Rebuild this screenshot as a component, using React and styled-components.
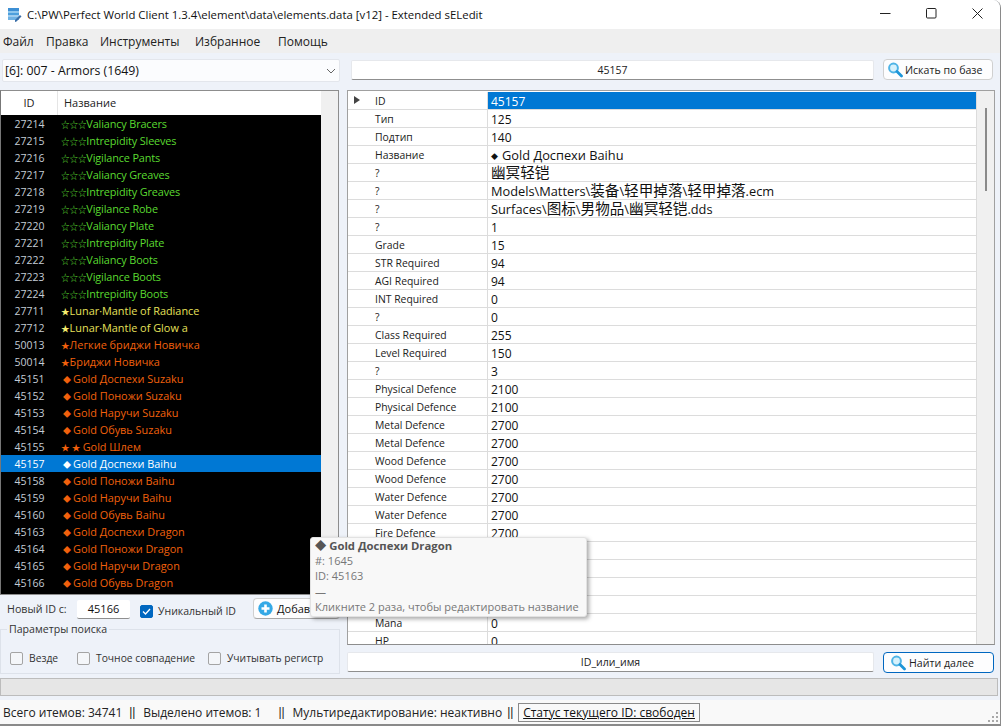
import React from 'react'
import styled, { createGlobalStyle } from 'styled-components'

const uiFont = `"Open Sans", "Noto Sans CJK SC", sans-serif`

const GlobalStyle = createGlobalStyle`
  html, body {
    margin: 0;
    padding: 0;
    background: #fff;
    overflow: hidden;
  }
  * { box-sizing: border-box; }
`

const items = [
  ['27214', '☆☆☆', 'Valiancy Bracers', 'green'],
  ['27215', '☆☆☆', 'Intrepidity Sleeves', 'green'],
  ['27216', '☆☆☆', 'Vigilance Pants', 'green'],
  ['27217', '☆☆☆', 'Valiancy Greaves', 'green'],
  ['27218', '☆☆☆', 'Intrepidity Greaves', 'green'],
  ['27219', '☆☆☆', 'Vigilance Robe', 'green'],
  ['27220', '☆☆☆', 'Valiancy Plate', 'green'],
  ['27221', '☆☆☆', 'Intrepidity Plate', 'green'],
  ['27222', '☆☆☆', 'Valiancy Boots', 'green'],
  ['27223', '☆☆☆', 'Vigilance Boots', 'green'],
  ['27224', '☆☆☆', 'Intrepidity Boots', 'green'],
  ['27711', '★', 'Lunar·Mantle of Radiance', 'yellow'],
  ['27712', '★', 'Lunar·Mantle of Glow a', 'yellow'],
  ['50013', '★', 'Легкие бриджи Новичка', 'orange'],
  ['50014', '★', 'Бриджи Новичка', 'orange'],
  ['45151', '◆', 'Gold Доспехи Suzaku', 'orange'],
  ['45152', '◆', 'Gold Поножи Suzaku', 'orange'],
  ['45153', '◆', 'Gold Наручи Suzaku', 'orange'],
  ['45154', '◆', 'Gold Обувь Suzaku', 'orange'],
  ['45155', '★ ★ ', 'Gold Шлем', 'orange'],
  ['45157', '◆', 'Gold Доспехи Baihu', 'selected'],
  ['45158', '◆', 'Gold Поножи Baihu', 'orange'],
  ['45159', '◆', 'Gold Наручи Baihu', 'orange'],
  ['45160', '◆', 'Gold Обувь Baihu', 'orange'],
  ['45163', '◆', 'Gold Доспехи Dragon', 'orange'],
  ['45164', '◆', 'Gold Поножи Dragon', 'orange'],
  ['45165', '◆', 'Gold Наручи Dragon', 'orange'],
  ['45166', '◆', 'Gold Обувь Dragon', 'orange'],
]

const fields = [
  ['ID', '45157'],
  ['Тип', '125'],
  ['Подтип', '140'],
  ['Название', '◆ Gold Доспехи Baihu'],
  ['?', '幽冥轻铠'],
  ['?', 'Models\\Matters\\装备\\轻甲掉落\\轻甲掉落.ecm'],
  ['?', 'Surfaces\\图标\\男物品\\幽冥轻铠.dds'],
  ['?', '1'],
  ['Grade', '15'],
  ['STR Required', '94'],
  ['AGI Required', '94'],
  ['INT Required', '0'],
  ['?', '0'],
  ['Class Required', '255'],
  ['Level Required', '150'],
  ['?', '3'],
  ['Physical Defence', '2100'],
  ['Physical Defence', '2100'],
  ['Metal Defence', '2700'],
  ['Metal Defence', '2700'],
  ['Wood Defence', '2700'],
  ['Wood Defence', '2700'],
  ['Water Defence', '2700'],
  ['Water Defence', '2700'],
  ['Fire Defence', '2700'],
  ['Fire Defence', '2700'],
  ['Earth Defence', '2700'],
  ['Earth Defence', '2700'],
  ['Damage', '0'],
  ['Mana', '0'],
  ['HP', '0'],
]

const itemColors = {
  green: '#5ada30',
  yellow: '#e6e05a',
  orange: '#f2600c',
  selected: '#ffffff',
}

const Window = styled.div`
  position: relative;
  width: 1001px;
  height: 726px;
  display: flex;
  flex-direction: column;
  overflow: hidden;
  background: #eef2f9;
  font-family: ${uiFont};
  color: #1a1a1a;
  border-right: 1px solid #8a8a8a;
  border-bottom: 2px solid #8a8a8a;
  border-top-right-radius: 8px;
`

const TitleBar = styled.div`
  height: 29px;
  flex: none;
  display: flex;
  align-items: center;
  background: #fff;
  padding-left: 8px;
`

const TitleText = styled.span`
  margin-left: 5px;
  font-size: 11.4px;
  color: #111;
  white-space: nowrap;
`

const WindowButtons = styled.div`
  margin-left: auto;
  align-self: flex-start;
  display: flex;
  align-items: center;
`

const WindowButton = styled.div`
  width: 46px;
  height: 26px;
  display: flex;
  align-items: center;
  justify-content: center;
`

const MenuBar = styled.div`
  height: 24px;
  flex: none;
  display: flex;
  align-items: center;
  background: #efefef;
  padding-left: 3px;
  font-size: 12px;
  color: #222;
`

const MenuItem = styled.span`
  width: ${(p) => p.$w}px;
  white-space: nowrap;
`

const Content = styled.div`
  flex: 1;
  min-height: 0;
  display: grid;
  grid-template-columns: 340px 1fr;
  column-gap: 7px;
  padding-top: 6px;
`

const LeftColumn = styled.div`
  display: flex;
  flex-direction: column;
  margin-left: 1px;
  margin-right: -1px;
`

const Combo = styled.div`
  height: 23px;
  flex: none;
  margin: 0 1px 0 1px;
  display: flex;
  align-items: center;
  justify-content: space-between;
  padding: 0 3px 0 2px;
  background: #fbfcfe;
  border: 1px solid #e3e6ec;
  border-radius: 2px;
  font-size: 12.3px;
  color: #111;
`

const ItemList = styled.div`
  margin-top: 8px;
  margin-left: -1px;
  width: 339px;
  height: 505px;
  flex: none;
  border: 1px solid #8d8d8d;
  border-left-color: #777;
  background: #f0f0f0;
  overflow: hidden;
`

const ListHeader = styled.div`
  width: 320px;
  height: 24px;
  display: grid;
  grid-template-columns: 57px 1fr;
  align-items: center;
  background: #fff;
  font-size: 11px;
  color: #222;
`

const HeaderCell = styled.div`
  height: 100%;
  display: flex;
  align-items: center;
  padding-left: ${(p) => p.$pad || 0}px;
  padding-bottom: 2px;
  justify-content: ${(p) => (p.$center ? 'center' : 'flex-start')};
  border-right: ${(p) => (p.$center ? '1px solid #e5e5e5' : 'none')};
`

const ListBody = styled.div`
  width: 320px;
  height: 479px;
  background: #000;
`

const ListRow = styled.div`
  height: 17px;
  display: grid;
  grid-template-columns: 57px 1fr;
  align-items: center;
  font-size: 10.9px;
  letter-spacing: ${(p) => (p.$kind === 'green' ? '-0.15px' : '0')};
  line-height: 17px;
  background: ${(p) => (p.$kind === 'selected' ? '#0078d4' : '#000')};
`

const RowId = styled.span`
  text-align: center;
  font-size: 10.5px;
  letter-spacing: 0;
  color: ${(p) => (p.$kind === 'selected' ? '#fff' : '#c4ccd6')};
`

const RowName = styled.span`
  padding-left: 3px;
  white-space: pre;
  color: ${(p) => itemColors[p.$kind]};
`

const RowGlyph = styled.span`
  display: inline-block;
  font-size: ${(p) => (p.$diamond ? '8px' : '8.6px')};
  width: ${(p) => (p.$diamond ? '12px' : 'auto')};
  padding-left: ${(p) => (p.$diamond ? '2px' : '0')};
  color: ${(p) => (p.$lit ? '#f5ec70' : 'inherit')};
`

const IdRow = styled.div`
  height: 28px;
  flex: none;
  display: flex;
  align-items: center;
  font-size: 10.7px;
  color: #333;
  padding-left: 6px;
`

const IdLabel = styled.span`
  width: 70px;
  white-space: nowrap;
`

const IdInput = styled.div`
  width: 53px;
  height: 19px;
  display: flex;
  align-items: center;
  justify-content: center;
  background: #fff;
  border-bottom: 1px solid #8f8f8f;
  border-radius: 2px;
  color: #111;
  font-size: 11px;
`

const CheckBox = styled.span`
  width: 13px;
  height: 13px;
  flex: none;
  display: flex;
  align-items: center;
  justify-content: center;
  border-radius: 2px;
  background: ${(p) => (p.$checked ? '#0067c0' : '#f4f6f9')};
  border: 1px solid ${(p) => (p.$checked ? '#0067c0' : '#a4a4a4')};
`

const CheckLabel = styled.span`
  margin-left: ${(p) => (p.$tight ? '5px' : '6px')};
  white-space: nowrap;
`

const UniqueBox = styled.div`
  margin: 4px 0 0 10px;
  width: 113px;
  display: flex;
  align-items: center;
  font-size: 10.5px;
`

const AddButton = styled.div`
  width: 87px;
  height: 21px;
  margin-top: -1px;
  display: flex;
  align-items: center;
  padding-left: 4px;
  gap: 4px;
  background: #fdfdfe;
  border: 1px solid #d0d0d0;
  border-bottom-color: #a8a8a8;
  border-radius: 4px;
  font-size: 11px;
  color: #111;
  white-space: nowrap;
`

const SearchGroup = styled.fieldset`
  margin: 0 0 0 -1px;
  padding: 15px 0 0 9px;
  width: 340px;
  height: 51px;
  flex: none;
  border: 1px solid #dde2ea;
  display: flex;
  align-items: center;
  font-size: 10.3px;
  color: #333;
`

const GroupLegend = styled.legend`
  margin-left: -3px;
  padding: 0 2px;
  font-size: 10.6px;
  line-height: 13px;
  color: #333;
`

const SearchOption = styled.div`
  display: flex;
  align-items: center;
  width: ${(p) => p.$w}px;
`

const RightColumn = styled.div`
  display: flex;
  flex-direction: column;
  min-width: 0;
`

const SearchRow = styled.div`
  height: 31px;
  flex: none;
  display: grid;
  grid-template-columns: 523px 110px;
  column-gap: 9px;
  padding-left: 4px;
  align-items: start;
`

const CenterField = styled.div`
  height: 20px;
  margin-top: ${(p) => (p.$bottom ? '0' : '1px')};
  display: flex;
  align-items: center;
  justify-content: center;
  background: #fff;
  border: 1px solid #e6e8ec;
  border-bottom-color: #8f8f8f;
  border-radius: 2px;
  font-size: 10.5px;
  color: #222;
`

const FindButton = styled.div`
  height: 21px;
  display: flex;
  align-items: center;
  padding-left: ${(p) => (p.$active ? '6px' : '3px')};
  gap: ${(p) => (p.$active ? '3px' : '2px')};
  background: #fdfdfe;
  border: 1px solid ${(p) => (p.$active ? '#0067c0' : '#d0d0d0')};
  border-radius: 4px;
  font-size: 10.6px;
  color: #222;
  white-space: nowrap;
`

const Grid = styled.div`
  width: 648px;
  height: 555px;
  flex: none;
  display: flex;
  border: 1px solid #a0a0a0;
  border-bottom-color: #8d8d8d;
  background: #f0f0f0;
  overflow: hidden;
`

const GridRows = styled.div`
  width: 628px;
  flex: none;
  padding-top: 1px;
  background: #fff;
`

const GridRow = styled.div`
  height: 18px;
  display: grid;
  grid-template-columns: 140px 1fr;
  background: #fff;
  border-bottom: 1px solid #dcdcdc;
`

const FieldLabel = styled.div`
  position: relative;
  padding-left: 27px;
  font-size: 10.4px;
  line-height: 19px;
  height: 17px;
  color: #222;
  border-right: 1px solid #dcdcdc;
  white-space: nowrap;
`

const RowPointer = styled.span`
  position: absolute;
  left: 6px;
  top: 4px;
  width: 0;
  height: 0;
  border-left: 6px solid #444;
  border-top: 4.5px solid transparent;
  border-bottom: 4.5px solid transparent;
`

const FieldValue = styled.div`
  padding-left: 3px;
  height: 17px;
  font-size: ${(p) => (p.$numeric ? '12px' : '12.8px')};
  line-height: 19px;
  white-space: pre;
  color: ${(p) => (p.$selected ? '#fff' : '#111')};
  background: ${(p) => (p.$selected ? '#0078d4' : '#fff')};
`

const Han = styled.span`
  font-size: 14.6px;
  line-height: 1;
`

const SmallDiamond = styled.span`
  display: inline-block;
  width: 11px;
  font-size: 7px;
  vertical-align: 1px;
  line-height: 1;
`

const GridScroll = styled.div`
  flex: 1;
  padding-top: 17px;
  display: flex;
  justify-content: center;
  border-left: 1px solid #dcdcdc;
`

const ScrollThumb = styled.div`
  width: 2px;
  height: 83px;
  background: #8a8a8a;
`

const BottomRow = styled.div`
  margin-top: 7px;
  display: grid;
  grid-template-columns: 527px 111px;
  column-gap: 9px;
`

const ProgressBar = styled.div`
  height: 18px;
  flex: none;
  margin: 4px 2px 0 0;
  background: #e6e6e6;
  border: 1px solid #bcbcbc;
`

const StatusBar = styled.div`
  position: relative;
  margin-top: 4px;
  height: 24px;
  flex: none;
  display: flex;
  align-items: center;
  padding-left: 3px;
  background: #f9f9f9;
  font-size: 12px;
  color: #222;
  white-space: pre;
`

const StatusSep = styled.span`
  font-family: "Liberation Sans", sans-serif;
  width: 6px;
  margin: 0 ${(p) => p.$right}px 0 ${(p) => p.$left}px;
`

const StatusLink = styled.span`
  padding: 1px 4px;
  border: 1px solid #8a8a8a;
  text-decoration: underline;
  line-height: 15px;
  color: #111;
`

const ResizeGrip = styled.svg`
  position: absolute;
  right: 1px;
  bottom: 1px;
`

const Tooltip = styled.div`
  position: absolute;
  left: 310px;
  top: 537px;
  width: 277px;
  height: 80px;
  padding: 0 4px;
  background: #f8f8f8;
  border: 1px solid #e2e2e2;
  border-radius: 3px;
  box-shadow: 2px 2px 4px rgba(0, 0, 0, 0.35);
  font-size: 11px;
  line-height: 15.2px;
  color: #777;
  white-space: nowrap;
`

const TooltipTitle = styled.div`
  font-weight: 700;
  font-size: 11.3px;
  color: #555;
`

const TitleIcon = () => (
  <svg width="14" height="16" viewBox="0 0 14 16">
    <rect x="0" y="1" width="11" height="3" fill="#3d8fd4" />
    <rect x="0" y="4" width="11" height="2" fill="#8ec6ec" />
    <rect x="0" y="6" width="11" height="2" fill="#4d9fdc" />
    <rect x="0" y="8" width="11" height="2" fill="#9fcdee" />
    <rect x="0" y="10" width="11" height="3" fill="#6fb2e4" />
    <path d="M7 13 L12 8 L13.5 9.5 L8.5 14.5 L7 15 Z" fill="#3b6fa8" />
  </svg>
)

const SearchIcon = () => (
  <svg width="16" height="16" viewBox="0 0 16 16">
    <circle cx="6.5" cy="6" r="4.4" fill="#d6f1fc" stroke="#4fb4e6" strokeWidth="2" />
    <path d="M10 9.5 L14.5 14" stroke="#1e96d8" strokeWidth="2.8" strokeLinecap="round" />
  </svg>
)

const PlusIcon = () => (
  <svg width="15" height="15" viewBox="0 0 15 15">
    <circle cx="7.5" cy="7.5" r="7.2" fill="#35a9e6" />
    <path d="M7.5 3.5 V11.5 M3.5 7.5 H11.5" stroke="#fff" strokeWidth="2.6" />
  </svg>
)

const Tick = () => (
  <svg width="11" height="11" viewBox="0 0 11 11">
    <path d="M2 5.5 L4.5 8 L9 3" fill="none" stroke="#fff" strokeWidth="1.3" />
  </svg>
)

// han characters are larger than the latin text around them in the value column
function renderValue(value) {
  if (value.startsWith('◆ ')) {
    return <><SmallDiamond>◆</SmallDiamond>{value.slice(2)}</>
  }
  return value.split(/([\u4e00-\u9fff]+)/).map((part, i) =>
    i % 2 ? <Han key={i}>{part}</Han> : part
  )
}

function App() {
  return (
    <Window>
      <GlobalStyle />
      <TitleBar>
        <TitleIcon />
        <TitleText>C:\PW\Perfect World Client 1.3.4\element\data\elements.data [v12] - Extended sELedit</TitleText>
        <WindowButtons>
          <WindowButton>
            <svg width="11" height="11" viewBox="0 0 11 11"><path d="M0 5.5 H10.5" stroke="#222" strokeWidth="1" /></svg>
          </WindowButton>
          <WindowButton>
            <svg width="11" height="11" viewBox="0 0 11 11"><rect x="0.5" y="0.5" width="9.5" height="9.5" rx="1" fill="none" stroke="#222" /></svg>
          </WindowButton>
          <WindowButton>
            <svg width="11" height="11" viewBox="0 0 11 11"><path d="M0.5 0.5 L10.5 10.5 M10.5 0.5 L0.5 10.5" stroke="#222" strokeWidth="1" /></svg>
          </WindowButton>
        </WindowButtons>
      </TitleBar>

      <MenuBar>
        <MenuItem $w={43}>Файл</MenuItem>
        <MenuItem $w={54}>Правка</MenuItem>
        <MenuItem $w={95}>Инструменты</MenuItem>
        <MenuItem $w={83}>Избранное</MenuItem>
        <MenuItem $w={60}>Помощь</MenuItem>
      </MenuBar>

      <Content>
        <LeftColumn>
          <Combo>
            [6]: 007 - Armors (1649)
            <svg width="10" height="6" viewBox="0 0 10 6"><path d="M1 1 L5 5 L9 1" fill="none" stroke="#666" /></svg>
          </Combo>
          <ItemList>
            <ListHeader>
              <HeaderCell $center>ID</HeaderCell>
              <HeaderCell $pad={6}>Название</HeaderCell>
            </ListHeader>
            <ListBody>
              {items.map(([id, glyph, name, kind]) => (
                <ListRow key={id} $kind={kind}>
                  <RowId $kind={kind}>{id}</RowId>
                  <RowName $kind={kind}>
                    <RowGlyph $diamond={glyph === '◆'} $lit={kind === 'yellow'}>{glyph}</RowGlyph>
                    {name}
                  </RowName>
                </ListRow>
              ))}
            </ListBody>
          </ItemList>
          <IdRow>
            <IdLabel>Новый ID с:</IdLabel>
            <IdInput>45166</IdInput>
            <UniqueBox>
              <CheckBox $checked><Tick /></CheckBox>
              <CheckLabel $tight>Уникальный ID</CheckLabel>
            </UniqueBox>
            <AddButton><PlusIcon />Добавить</AddButton>
          </IdRow>
          <SearchGroup>
            <GroupLegend>Параметры поиска</GroupLegend>
            <SearchOption $w={67}><CheckBox /><CheckLabel>Везде</CheckLabel></SearchOption>
            <SearchOption $w={131}><CheckBox /><CheckLabel>Точное совпадение</CheckLabel></SearchOption>
            <SearchOption $w={125}><CheckBox /><CheckLabel>Учитывать регистр</CheckLabel></SearchOption>
          </SearchGroup>
        </LeftColumn>

        <RightColumn>
          <SearchRow>
            <CenterField>45157</CenterField>
            <FindButton><SearchIcon />Искать по базе</FindButton>
          </SearchRow>
          <Grid>
            <GridRows>
              {fields.map(([label, value], i) => (
                <GridRow key={i}>
                  <FieldLabel>
                    {i === 0 && <RowPointer />}
                    {label}
                  </FieldLabel>
                  <FieldValue $selected={i === 0} $numeric={/^\d+$/.test(value)}>{renderValue(value)}</FieldValue>
                </GridRow>
              ))}
            </GridRows>
            <GridScroll><ScrollThumb /></GridScroll>
          </Grid>
          <BottomRow>
            <CenterField $bottom>ID_или_имя</CenterField>
            <FindButton $active><SearchIcon />Найти далее</FindButton>
          </BottomRow>
        </RightColumn>
      </Content>

      <ProgressBar />
      <StatusBar>
        Всего итемов: 34741
        <StatusSep $left={7} $right={8}>||</StatusSep>
        Выделено итемов: 1
        <StatusSep $left={17} $right={8}>||</StatusSep>
        Мультиредактирование: неактивно
        <StatusSep $left={5} $right={5}>||</StatusSep>
        <StatusLink>Статус текущего ID: свободен</StatusLink>
        <ResizeGrip width="11" height="11" viewBox="0 0 11 11">
          <path d="M8 0h2v2H8z M4 4h2v2H4z M8 4h2v2H8z M0 8h2v2H0z M4 8h2v2H4z M8 8h2v2H8z" fill="#a8a8a8" />
        </ResizeGrip>
      </StatusBar>

      <Tooltip>
        <TooltipTitle>◆ Gold Доспехи Dragon</TooltipTitle>
        <div>#: 1645</div>
        <div>ID: 45163</div>
        <div>—</div>
        <div>Кликните 2 раза, чтобы редактировать название</div>
      </Tooltip>
    </Window>
  )
}

export default App
